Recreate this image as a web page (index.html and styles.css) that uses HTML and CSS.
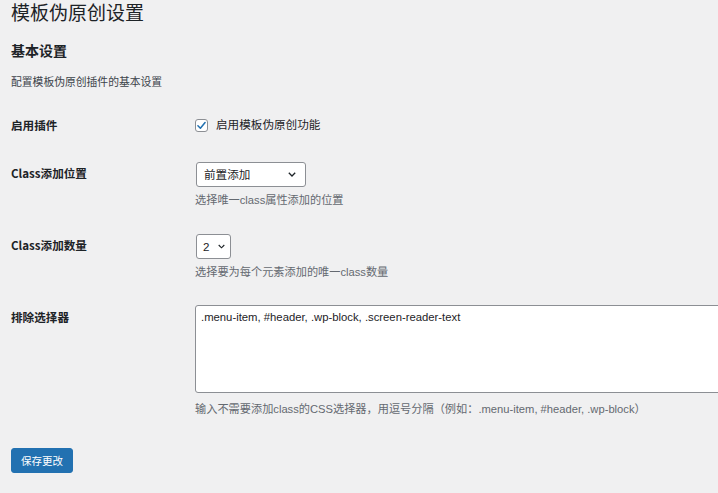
FILE: index.html
```html
<!DOCTYPE html>
<html lang="zh-CN">
<head>
<meta charset="utf-8">
<title>模板伪原创设置</title>
<link rel="stylesheet" href="styles.css">
</head>
<body>
<div class="wrap">
  <h1 class="title">模板伪原创设置</h1>
  <h2 class="section">基本设置</h2>
  <p class="intro">配置模板伪原创插件的基本设置</p>

  <div class="row row-enable">
    <div class="th">启用插件</div>
    <div class="td">
      <label class="check">
        <span class="box"><svg width="11" height="11" viewBox="0 0 20 20"><path d="M3.5 10.5 L8 15 L16.5 4.5" fill="none" stroke="#2271b1" stroke-width="2.8" stroke-linecap="round" stroke-linejoin="round"/></svg></span>
        <span>启用模板伪原创功能</span>
      </label>
    </div>
  </div>

  <div class="row row-pos">
    <div class="th">Class添加位置</div>
    <div class="td">
      <div class="select select-wide">
        <span>前置添加</span>
        <svg class="chev" width="8" height="5" viewBox="0 0 8 5"><path d="M0.8 0.8 L4 4 L7.2 0.8" fill="none" stroke="#1d2327" stroke-width="1.3"/></svg>
      </div>
      <p class="desc">选择唯一class属性添加的位置</p>
    </div>
  </div>

  <div class="row row-num">
    <div class="th">Class添加数量</div>
    <div class="td">
      <div class="select select-narrow">
        <span>2</span>
        <svg class="chev" width="7" height="5" viewBox="0 0 8 5"><path d="M0.8 0.8 L4 4 L7.2 0.8" fill="none" stroke="#1d2327" stroke-width="1.3"/></svg>
      </div>
      <p class="desc">选择要为每个元素添加的唯一class数量</p>
    </div>
  </div>

  <div class="row row-exclude">
    <div class="th">排除选择器</div>
    <div class="td">
      <textarea class="area">.menu-item, #header, .wp-block, .screen-reader-text</textarea>
      <p class="desc desc-area">输入不需要添加class的CSS选择器，用逗号分隔（例如：.menu-item, #header, .wp-block）</p>
    </div>
  </div>

  <button class="save">保存更改</button>
</div>
</body>
</html>
```

FILE: styles.css
```css
html, body {
  margin: 0;
  padding: 0;
  background: #f0f0f1;
  overflow: hidden;
}
body {
  font-family: "Liberation Sans", "Noto Sans CJK SC", sans-serif;
  color: #1d2327;
  width: 718px;
  height: 493px;
}
.wrap {
  padding-left: 11px;
}
.title {
  margin: 0;
  font-size: 19px;
  font-weight: 400;
  line-height: 28px;
}
.section {
  margin: 14px 0 0;
  font-size: 14px;
  font-weight: 700;
  line-height: 18px;
}
.intro {
  margin: 14px 0 0;
  font-size: 10.8px;
  line-height: 16px;
  color: #3c434a;
}
.row {
  display: flex;
}
.th {
  width: 184px;
  flex: none;
  font-family: "Noto Sans CJK SC", "Liberation Sans", sans-serif;
  font-size: 11.6px;
  font-weight: 700;
  line-height: 18px;
}
.td {
  flex: none;
  font-size: 11.6px;
  line-height: 18px;
}
.row-enable { margin-top: 26px; }
.row-pos { margin-top: 28px; }
.row-pos .th { padding-top: 2px; }
.row-num { margin-top: 26px; }
.row-num .th { padding-top: 2px; }
.row-exclude { margin-top: 25px; }
.row-exclude .th { padding-top: 3px; }

.check {
  display: flex;
  align-items: center;
  gap: 8px;
}
.box {
  width: 11px;
  height: 11px;
  border: 1px solid #8c8f94;
  border-radius: 3px;
  background: #fff;
  display: flex;
  align-items: center;
  justify-content: center;
}
.select {
  box-sizing: border-box;
  height: 25px;
  margin-left: 1px;
  border: 1px solid #8c8f94;
  border-radius: 3px;
  background: #fff;
  display: flex;
  align-items: center;
  justify-content: space-between;
  font-size: 11.6px;
}
.select-wide {
  width: 110px;
  padding: 0 9px 0 7px;
}
.select-narrow {
  width: 35px;
  padding: 0 5px 0 6px;
}
.desc {
  margin: 5px 0 0;
  font-size: 11.2px;
  line-height: 16px;
  color: #646970;
}
.area {
  display: block;
  box-sizing: border-box;
  width: 540px;
  height: 88px;
  margin: 0;
  padding: 3px 5px;
  border: 1px solid #8c8f94;
  border-radius: 3px;
  background: #fff;
  color: #1d2327;
  font-family: "Liberation Sans", "Noto Sans CJK SC", sans-serif;
  font-size: 11.3px;
  line-height: 16px;
  resize: none;
  overflow: hidden;
}
.desc-area {
  margin-top: 8px;
}
.save {
  display: block;
  margin: 31px 0 0;
  height: 25px;
  padding: 0 9px;
  border: 1px solid #2271b1;
  border-radius: 3px;
  background: #2271b1;
  color: #fff;
  font-family: "Noto Sans CJK SC", "Liberation Sans", sans-serif;
  font-size: 10.5px;
  line-height: 23px;
}
```
